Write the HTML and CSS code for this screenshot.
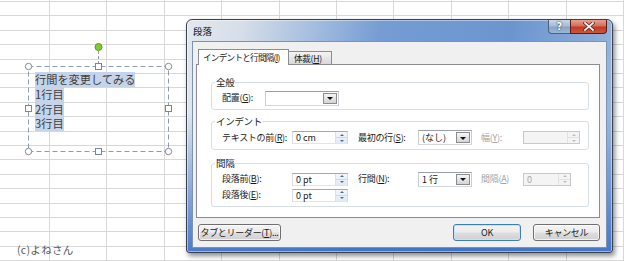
FILE: index.html
```html
<!DOCTYPE html>
<html lang="ja">
<head>
<meta charset="utf-8">
<title>段落</title>
<link rel="stylesheet" href="styles.css">
</head>
<body>
<div class="sheet">
  <div class="shape">
    <svg class="shape-frame" width="152" height="120" viewBox="0 0 152 120">
      <line x1="76.5" y1="9" x2="76.5" y2="21" stroke="#8a9bb5" stroke-width="1" stroke-dasharray="3 2"/>
      <rect x="6.5" y="24.5" width="140" height="85" fill="none" stroke="#8c9cb6" stroke-width="1" stroke-dasharray="5 3"/>
      <circle cx="76.5" cy="5" r="3.5" fill="#7ccd2d" stroke="#5a9a22"/>
      <g fill="#fff" stroke="#8a8a8a">
        <circle cx="6.5" cy="24.5" r="3.2"/>
        <circle cx="146.5" cy="24.5" r="3.2"/>
        <circle cx="6.5" cy="109.5" r="3.2"/>
        <circle cx="146.5" cy="109.5" r="3.2"/>
      </g>
      <g fill="#fff" stroke="#7388a6">
        <rect x="73.5" y="21.5" width="6" height="6"/>
        <rect x="73.5" y="106.5" width="6" height="6"/>
        <rect x="3.5" y="63.5" width="6" height="6"/>
        <rect x="143.5" y="63.5" width="6" height="6"/>
      </g>
    </svg>
    <div class="shape-text">
      <div class="sel">行間を変更してみる</div>
      <div class="sel">1行目</div>
      <div class="sel">2行目</div>
      <div class="sel">3行目</div>
    </div>
  </div>

  <div class="credit">(c)よねさん</div>

  <div class="dialog">
    <div class="titlebar">
      <span class="title">段落</span>
      <div class="caption-btns">
        <div class="cap help">?</div>
        <div class="cap close">
          <svg width="12" height="9" viewBox="0 0 12 9"><path d="M2 1 L10 8 M10 1 L2 8" stroke="#5a2a22" stroke-width="3.4" stroke-linecap="square"/><path d="M2 1 L10 8 M10 1 L2 8" stroke="#f4eeee" stroke-width="1.8" stroke-linecap="square"/></svg>
        </div>
      </div>
    </div>
    <div class="client">
      <div class="tabs">
        <div class="tab active">インデントと行間隔(<u>I</u>)</div>
        <div class="tab">体裁(<u>H</u>)</div>
      </div>
      <div class="panel">
        <fieldset class="group g1">
          <legend>全般</legend>
          <div class="row">
            <span class="lbl l-short">配置(<u>G</u>):</span>
            <div class="combo c-wide"><span class="val"></span><span class="drop"></span></div>
          </div>
        </fieldset>
        <fieldset class="group g2">
          <legend>インデント</legend>
          <div class="row tall">
            <span class="lbl l1">テキストの前(<u>R</u>):</span>
            <div class="spinbox c1"><span class="val">0 cm</span><span class="spin"><i class="up"></i><i class="down"></i></span></div>
            <span class="lbl l2">最初の行(<u>S</u>):</span>
            <div class="combo c2"><span class="val">(なし)</span><span class="drop"></span></div>
            <span class="lbl l3 dis">幅(<u>Y</u>):</span>
            <div class="spinbox c3 disabled"><span class="val"></span><span class="spin"><i class="up"></i><i class="down"></i></span></div>
          </div>
        </fieldset>
        <fieldset class="group g3">
          <legend>間隔</legend>
          <div class="row">
            <span class="lbl l1">段落前(<u>B</u>):</span>
            <div class="spinbox c1"><span class="val">0 pt</span><span class="spin"><i class="up"></i><i class="down"></i></span></div>
            <span class="lbl l2">行間(<u>N</u>):</span>
            <div class="combo c2"><span class="val">1 行</span><span class="drop"></span></div>
            <span class="lbl l3 dis">間隔(<u>A</u>)</span>
            <div class="spinbox c4 disabled"><span class="val">0</span><span class="spin"><i class="up"></i><i class="down"></i></span></div>
          </div>
          <div class="row">
            <span class="lbl l1">段落後(<u>E</u>):</span>
            <div class="spinbox c1"><span class="val">0 pt</span><span class="spin"><i class="up"></i><i class="down"></i></span></div>
          </div>
        </fieldset>
      </div>
      <div class="footer">
        <div class="btn b-tabs">タブとリーダー(<u>T</u>)...</div>
        <div class="btn b-ok">OK</div>
        <div class="btn b-cancel">キャンセル</div>
      </div>
    </div>
  </div>
</div>
</body>
</html>
```

FILE: styles.css
```css
* { box-sizing: border-box; }
html, body { margin: 0; padding: 0; }
body {
  width: 624px;
  height: 261px;
  overflow: hidden;
  background: #fff;
  font-family: "Noto Sans CJK JP", "Noto Sans", sans-serif;
  color: #1a1a1a;
}

/* spreadsheet canvas */
.sheet {
  position: relative;
  width: 624px;
  height: 261px;
  background-color: #fff;
  background-image:
    repeating-linear-gradient(90deg, #d8d8d8 -8.4px, #d8d8d8 -7.4px, transparent -7.4px, transparent 49px),
    repeating-linear-gradient(180deg, #d8d8d8 1px, #d8d8d8 2px, transparent 2px, transparent 15.4px);
}

/* text box shape */
.shape {
  position: absolute;
  left: 28px;
  top: 66px;
  width: 140px;
  height: 85px;
}
.shape-frame {
  position: absolute;
  left: -6px;
  top: -24px;
  overflow: visible;
}
.shape-text {
  position: relative;
  padding: 6px 0 0 7px;
  font-size: 11.2px;
  line-height: 14.75px;
  color: #3e3e3e;
}
.sel {
  width: fit-content;
  background: #c6d4e9;
}

.credit {
  position: absolute;
  left: 17px;
  top: 243px;
  font-size: 10.5px;
  line-height: 14px;
  color: #5a5a5a;
  letter-spacing: 0.3px;
}

/* dialog window */
.dialog {
  position: absolute;
  left: 186px;
  top: 19px;
  width: 427px;
  height: 234px;
  display: flex;
  flex-direction: column;
  padding: 0 5px 4px 5px;
  border: 1px solid #39424f;
  border-radius: 6px 6px 3px 3px;
  background:
    linear-gradient(180deg, rgba(255,255,255,0) 40%, rgba(58,112,200,0.9) 100%),
    linear-gradient(100deg, #e3e8ee 0%, #d6dee9 12%, #a3bcdf 28%, #759cd3 42%, #6c95d0 70%, #89aad9 88%, #a9c2e4 100%);
  box-shadow: 2px 3px 5px rgba(0,0,0,0.45), inset 0 0 0 1px rgba(255,255,255,0.45);
}
.titlebar {
  height: 21px;
  display: flex;
  align-items: flex-start;
}
.title {
  margin: 5px 0 0 1px;
  font-size: 9.5px;
  line-height: 12px;
  color: #111;
}
.caption-btns {
  margin-left: auto;
  display: flex;
  height: 14px;
}
.cap {
  height: 14px;
  display: flex;
  align-items: center;
  justify-content: center;
}
.help {
  width: 22px;
  border: 1px solid #4c5f7c;
  border-top: none;
  border-right: none;
  border-radius: 0 0 0 4px;
  background: linear-gradient(180deg, #c9d6e6 0%, #a8bdd7 45%, #8aa4c6 55%, #9db6d6 100%);
  color: #fff;
  font-family: "DejaVu Sans", sans-serif;
  font-weight: bold;
  font-size: 10px;
  text-shadow: 0 0 2px #34445c, 0 0 1px #34445c;
}
.close {
  width: 37px;
  border: 1px solid #5b1d14;
  border-top: none;
  border-radius: 0 0 4px 0;
  background: linear-gradient(180deg, #e4a294 0%, #d4705b 45%, #c23a22 55%, #d0553a 100%);
}

.client {
  flex: 1;
  display: flex;
  flex-direction: column;
  background: #f0f0f0;
  border: 1px solid #7f92ab;
  padding-top: 7px;
  font-size: 9px;
  line-height: 12px;
  letter-spacing: -0.3px;
}

/* tabs */
.tabs {
  display: flex;
  align-items: flex-end;
  height: 15px;
  margin-left: 5px;
}
.tab {
  height: 13px;
  padding: 0 5px;
  border: 1px solid #898c95;
  border-bottom: none;
  background: linear-gradient(180deg, #f4f4f4 0%, #e6e6e6 50%, #d8d8d8 100%);
  font-size: 8.6px;
  line-height: 12px;
  letter-spacing: -0.75px;
  white-space: nowrap;
  overflow: hidden;
}
.tab.active {
  position: relative;
  z-index: 1;
  height: 16px;
  margin-bottom: -1px;
  width: 91px;
  padding: 1px 0 0 4px;
  background: #fff;
}
.tab:not(.active) {
  width: 44px;
  margin-left: -1px;
  padding-left: 5px;
  letter-spacing: -0.3px;
}

.panel {
  margin: 0 6px 0 3px;
  height: 154px;
  border: 1px solid #898c95;
  background: #fff;
  padding: 11px 10px 10px 14px;
  display: flex;
  flex-direction: column;
}
.group {
  margin: 0;
  padding: 3px 0 4px 0;
  border: 1px solid #d5dfe5;
  border-radius: 3px;
  min-width: 0;
}
.group legend {
  margin-left: 3px;
  padding: 0 1px;
  font-size: 9.5px;
  line-height: 12px;
  color: #1a1a1a;
}
.g2 { margin-top: 5px; }
.g3 { margin-top: 7px; padding-bottom: 4px; }
.g3 .row + .row { margin-top: 2px; }

.row {
  display: flex;
  align-items: center;
  height: 14px;
  padding-left: 10px;
}
.row.tall { height: 15px; }
.lbl { white-space: nowrap; flex: none; }
.lbl.dis { color: #a3a3a3; }
.l-short { width: 43px; }
.l1 { width: 70px; }
.l2 { width: 60px; margin-left: 10px; }
.l3 { width: 42px; margin-left: 9px; }

.combo, .spinbox {
  flex: none;
  display: flex;
  align-items: stretch;
  background: #fff;
  border: 1px solid;
  border-color: #a5a8ae #d7dbe2 #e1e5ea #d9dde3;
}
.combo { height: 15px; border-color: #9a9ea5 #c9ccd1 #d4d7dc #c9ccd1; }
.spinbox { height: 13px; }
.c-wide { width: 74px; }
.c1 { width: 56px; }
.c2 { width: 54px; }
.c3 { width: 57px; }
.c4 { width: 48px; }
.val {
  flex: 1;
  padding-left: 3px;
  font-size: 9px;
  line-height: 11px;
  white-space: nowrap;
  letter-spacing: 0;
}
.combo .val { line-height: 13px; }
.drop {
  flex: none;
  width: 14px;
  margin: 1px;
  border: 1px solid #8a8c8f;
  background: linear-gradient(180deg, #f7f7f7 0%, #e4e4e4 50%, #d4d4d4 100%);
  display: flex;
  align-items: center;
  justify-content: center;
}
.drop::after {
  content: "";
  border-left: 3px solid transparent;
  border-right: 3px solid transparent;
  border-top: 3px solid #111;
  margin-top: 1px;
}
.spin {
  flex: none;
  width: 12px;
  margin: 0;
  display: flex;
  flex-direction: column;
  border-left: 1px solid #d9e2ec;
  background: linear-gradient(180deg, #f3f7fb, #e2eaf3);
}
.spin i {
  flex: 1;
  display: flex;
  align-items: center;
  justify-content: center;
}
.spin i + i { border-top: 1px solid #cfd9e5; }
.spin .up::after {
  content: "";
  border-left: 2.5px solid transparent;
  border-right: 2.5px solid transparent;
  border-bottom: 2.5px solid #506a8e;
}
.spin .down::after {
  content: "";
  border-left: 2.5px solid transparent;
  border-right: 2.5px solid transparent;
  border-top: 2.5px solid #506a8e;
}
.spinbox.disabled {
  background: #f4f4f4;
  border-color: #c7c9cc;
  color: #a8a8a8;
}
.spinbox.disabled .spin { background: #f4f4f4; border-left-color: #e2e2e2; }
.spinbox.disabled .spin i + i { border-top-color: #e2e2e2; }
.spinbox.disabled .spin .up::after { border-bottom-color: #b9bec4; }
.spinbox.disabled .spin .down::after { border-top-color: #b9bec4; }

/* footer buttons */
.footer {
  display: flex;
  margin: 6px 6px 0 5px;
}
.btn {
  height: 17px;
  display: flex;
  align-items: center;
  justify-content: center;
  border: 1px solid #707070;
  border-radius: 3px;
  background: linear-gradient(180deg, #f4f4f4 0%, #ececec 48%, #dedede 52%, #d0d0d0 100%);
  box-shadow: inset 0 0 0 1px rgba(255,255,255,0.7);
  font-size: 9px;
  white-space: nowrap;
}
.b-tabs { width: 83px; }
.b-ok {
  width: 68px;
  margin-left: auto;
  border-color: #3c7fb1;
  box-shadow: inset 0 0 0 1px #c4e3f8;
}
.b-cancel { width: 67px; margin-left: 12px; }
u { text-decoration: underline; text-underline-offset: 1px; }
```
